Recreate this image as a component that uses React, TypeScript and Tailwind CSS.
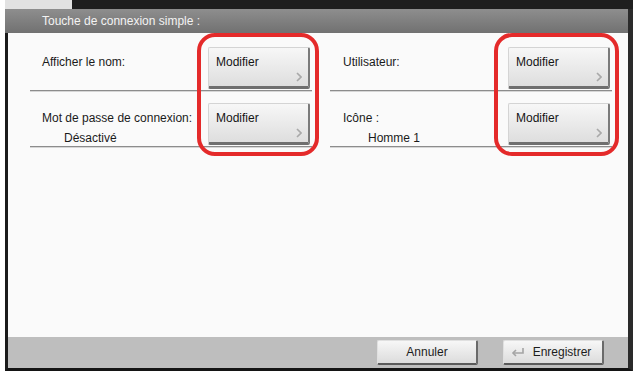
import React from "react";

const font = { fontFamily: '"Liberation Sans", Arial, sans-serif' };

function Chevron() {
  return (
    <svg width="6" height="10" viewBox="0 0 6 10" className="absolute bottom-[4px] right-[6px]">
      <polyline points="1,1 5,5 1,9" fill="none" stroke="#a9a9a9" strokeWidth="1.6" />
    </svg>
  );
}

function ModifyButton() {
  return (
    <div
      role="button"
      className="relative h-[42px] w-[102px] shrink-0 rounded-[2px] border-t border-l border-[#d4d4d4] border-b-[3px] border-r-2 border-b-[#6f6f6f] border-r-[#7a7a7a] bg-gradient-to-b from-[#f7f7f7] to-[#dedede] pl-[7px] pt-[6px] text-left text-[12px] leading-4 text-[#151515]"
    >
      Modifier
      <Chevron />
    </div>
  );
}

function Row({
  label,
  value,
  valueIndent,
  labelPad,
}: {
  label: string;
  value?: string;
  valueIndent: string;
  labelPad: string;
}) {
  return (
    <div className="flex h-[56px] items-end justify-between border-b border-[#8c8c8c] shadow-[0_1px_0_#d6d6d6]">
      <div className={`self-start pt-[19px] text-[12px] leading-4 text-[#1a1a1a] ${labelPad}`}>
        <div>{label}</div>
        {value && <div className={`mt-[4px] ${valueIndent}`}>{value}</div>}
      </div>
      <div className="mb-[1px] mr-[2px]">
        <ModifyButton />
      </div>
    </div>
  );
}

function FooterButton({ label, icon }: { label: string; icon?: boolean }) {
  return (
    <button
      type="button"
      className="relative flex h-[25px] w-[101px] items-center justify-center rounded-[2px] border-t border-l border-[#e0e0e0] border-b-2 border-r-2 border-b-[#5a5a5a] border-r-[#6a6a6a] bg-gradient-to-b from-[#f7f7f7] to-[#dcdcdc] text-[12px] text-[#1c1c1c]"
    >
      {icon && (
        <svg width="16" height="12" viewBox="0 0 16 12" className="absolute left-[6px] top-[6px]">
          <path d="M13 1v5H4" fill="none" stroke="#a4a4a4" strokeWidth="1.6" />
          <path d="M6 3L3 6l3 3" fill="none" stroke="#a4a4a4" strokeWidth="1.6" />
        </svg>
      )}
      <span className={icon ? "pl-[18px]" : ""}>{label}</span>
    </button>
  );
}

export default function App() {
  return (
    <div className="relative h-[376px] w-[640px] overflow-hidden bg-white" style={font}>
      <div className="ml-[5px] flex h-[371px] w-[628px] flex-col">
        {/* top strip */}
        <div className="flex h-[9px]">
          <div className="w-[67px] bg-[#e2e2e2]" />
          <div className="flex-1 bg-[#1f1f1f]" />
        </div>

        {/* header */}
        <div className="flex h-[24px] items-center border-r-[5px] border-[#2a2a2a] bg-gradient-to-b from-[#8e8e8e] to-[#717171] pl-[37px] text-[12px] text-[#f3f3f3]">
          Touche de connexion simple :
        </div>

        {/* content */}
        <div className="flex flex-1 border-l-[3px] border-r-[5px] border-l-[#1b1b1b] border-r-[#2a2a2a] bg-[#fafafa] pl-[22px] pr-[16px] pt-[2px]">
          <div className="w-[282px]">
            <Row label="Afficher le nom:" labelPad="pl-[12px]" valueIndent="" />
            <Row
              label="Mot de passe de connexion:"
              value="Désactivé"
              labelPad="pl-[12px]"
              valueIndent="pl-[22px]"
            />
          </div>
          <div className="ml-[18px] w-[282px]">
            <Row label="Utilisateur:" labelPad="pl-[13px]" valueIndent="" />
            <Row label="Icône :" value="Homme 1" labelPad="pl-[13px]" valueIndent="pl-[25px]" />
          </div>
        </div>

        {/* footer */}
        <div className="flex h-[34px] items-start justify-end gap-[25px] border-b-[3px] border-l-[3px] border-r-[5px] border-b-[#141414] border-l-[#1b1b1b] border-r-[#2a2a2a] bg-[#bebebe] pr-[24px] pt-[3px]">
          <FooterButton label="Annuler" />
          <FooterButton label="Enregistrer" icon />
        </div>
      </div>

      {/* annotation rings */}
      <div className="pointer-events-none absolute left-[197px] top-[33px] h-[123px] w-[122px] rounded-[18px] border-[4px] border-[#e42a2a]" />
      <div className="pointer-events-none absolute left-[494px] top-[33px] h-[123px] w-[125px] rounded-[18px] border-[4px] border-[#e42a2a]" />
    </div>
  );
}
